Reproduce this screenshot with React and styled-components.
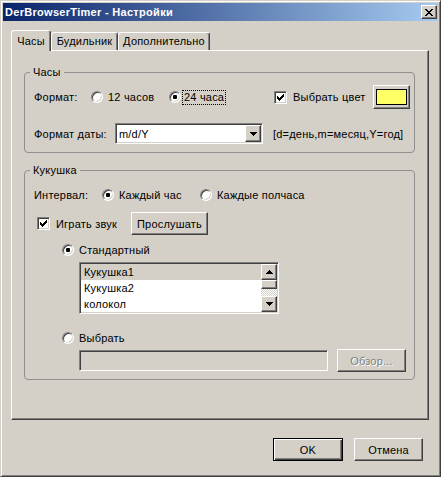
import React from "react";
import styled, { createGlobalStyle, css } from "styled-components";

// classic 3D palette
const FACE = "#d4d0c8";
const SHADOW = "#808080";
const DARK = "#404040";

const GlobalStyle = createGlobalStyle`
  html, body {
    margin: 0;
    padding: 0;
    background: ${FACE};
  }
`;

const raised = css`
  border: 1px solid;
  border-color: #fff ${DARK} ${DARK} #fff;
  box-shadow: inset -1px -1px ${SHADOW}, inset 1px 1px ${FACE};
`;

const sunken = css`
  border: 1px solid;
  border-color: ${SHADOW} #fff #fff ${SHADOW};
  box-shadow: inset 1px 1px ${DARK}, inset -1px -1px ${FACE};
  padding: 1px;
`;

const Window = styled.div`
  width: 441px;
  height: 477px;
  box-sizing: border-box;
  background: ${FACE};
  border: 1px solid;
  border-color: ${FACE} ${DARK} ${DARK} ${FACE};
  box-shadow: inset 1px 1px #fff, inset -1px -1px ${SHADOW};
  padding: 2px;
  display: flex;
  flex-direction: column;
  font: 11px "Liberation Sans", Arial, sans-serif;
  letter-spacing: 0.2px;
  color: #000;
`;

const TitleBar = styled.div`
  height: 18px;
  flex: none;
  display: flex;
  align-items: center;
  justify-content: space-between;
  padding: 0 1px 0 2px;
  background: linear-gradient(90deg, #0a246a, #a6caf0);
  color: #fff;
  font-weight: bold;
  letter-spacing: 0.3px;
`;

const CloseButton = styled.div`
  width: 16px;
  height: 14px;
  box-sizing: border-box;
  ${raised};
  background: ${FACE};
  display: flex;
  align-items: center;
  justify-content: center;
`;

const Body = styled.div`
  flex: 1;
  display: flex;
  flex-direction: column;
  padding: 9px 9px 0 8px;
`;

const TabStrip = styled.div`
  height: 20px;
  display: flex;
  align-items: flex-end;
`;

const Tab = styled.div`
  box-sizing: border-box;
  width: ${(p) => p.$w}px;
  height: ${(p) => (p.$active ? 21 : 18)}px;
  margin-bottom: ${(p) => (p.$active ? -1 : 0)}px;
  z-index: ${(p) => (p.$active ? 1 : 0)};
  padding-bottom: 1px;
  border: 1px solid;
  border-bottom: none;
  border-color: #fff ${DARK} transparent #fff;
  border-radius: 3px 3px 0 0;
  box-shadow: inset -1px 0 ${SHADOW};
  background: ${FACE};
  display: flex;
  align-items: center;
  justify-content: center;
`;

const TabPanel = styled.div`
  height: 370px;
  box-sizing: border-box;
  border: 1px solid;
  border-color: #fff ${DARK} ${DARK} #fff;
  box-shadow: inset -1px -1px ${SHADOW};
  padding: 15px 13px 0 12px;
  display: flex;
  flex-direction: column;
`;

const Group = styled.fieldset`
  margin: ${(p) => p.$top}px 0 0;
  padding: 0 0 0 5px;
  height: ${(p) => p.$height}px;
  box-sizing: border-box;
  min-width: 0;
  border: 1px solid #8f8f8f;
  border-radius: 4px;
`;

const Legend = styled.legend`
  padding: 0 3px;
  line-height: 13px;
  font-size: 11px;
`;

const GroupBody = styled.div`
  padding-left: 4px;
  display: flex;
  flex-direction: column;
`;

const Row = styled.div`
  display: flex;
  align-items: center;
  height: ${(p) => p.$h}px;
  margin-top: ${(p) => p.$top}px;
  padding-left: ${(p) => p.$indent || 0}px;
`;

const Label = styled.span`
  width: ${(p) => p.$w}px;
  flex: none;
`;

const Choice = styled.label`
  display: flex;
  align-items: center;
  width: ${(p) => (p.$w ? `${p.$w}px` : "auto")};
  flex: none;
  gap: ${(p) => p.$gap}px;
`;

const RadioCircle = styled.span`
  width: 12px;
  height: 12px;
  box-sizing: border-box;
  border-radius: 50%;
  border: 1px solid;
  border-color: ${SHADOW} #fff #fff ${SHADOW};
  box-shadow: inset 1px 1px ${DARK}, inset -1px -1px ${FACE};
  background: #fff;
  display: flex;
  align-items: center;
  justify-content: center;
  flex: none;

  &::after {
    content: "";
    width: 4px;
    height: 4px;
    border-radius: 1px;
    background: ${(p) => (p.$on ? "#000" : "transparent")};
  }
`;

const CheckBox = styled.span`
  width: 13px;
  height: 13px;
  box-sizing: border-box;
  ${sunken};
  background: #fff;
  display: flex;
  align-items: center;
  justify-content: center;
  flex: none;
`;

const Focus = styled.span`
  outline: 1px dotted #000;
  padding: 0 1px;
  line-height: 13px;
`;

const Button = styled.button`
  width: ${(p) => p.$w}px;
  height: ${(p) => p.$h || 23}px;
  margin-left: ${(p) => p.$left || 0}px;
  box-sizing: border-box;
  flex: none;
  padding: 0;
  font: inherit;
  letter-spacing: inherit;
  background: ${FACE};
  color: ${(p) => (p.disabled ? SHADOW : "#000")};
  text-shadow: ${(p) => (p.disabled ? "1px 1px #fff" : "none")};
  display: flex;
  align-items: center;
  justify-content: center;
  ${(p) =>
    p.$default
      ? css`
          border: 1px solid #000;
          box-shadow: inset 1px 1px #fff, inset -1px -1px ${DARK},
            inset -2px -2px ${SHADOW};
        `
      : raised};
`;

const Swatch = styled.span`
  width: 29px;
  height: 14px;
  border: 1px solid #000;
  background: #ffff66;
`;

const Combo = styled.div`
  width: 148px;
  height: 21px;
  box-sizing: border-box;
  ${sunken};
  background: #fff;
  display: flex;
  flex: none;
`;

const ComboText = styled.span`
  flex: 1;
  padding-left: 2px;
  display: flex;
  align-items: center;
`;

const ArrowButton = styled.span`
  width: 16px;
  height: ${(p) => p.$h || 16}px;
  box-sizing: border-box;
  ${raised};
  background: ${FACE};
  display: flex;
  align-items: center;
  justify-content: center;
  flex: none;
`;

const Hint = styled.span`
  margin-left: 10px;
`;

const ListBox = styled.div`
  width: 200px;
  height: 52px;
  box-sizing: border-box;
  margin: 2px 0 0 45px;
  ${sunken};
  background: #fff;
  display: flex;
`;

const Items = styled.div`
  flex: 1;
  display: flex;
  flex-direction: column;
`;

const Item = styled.div`
  height: 16px;
  line-height: 16px;
  padding-left: 3px;
  background: ${(p) => (p.$selected ? FACE : "transparent")};
`;

const ScrollBar = styled.div`
  width: 16px;
  display: flex;
  flex-direction: column;
`;

const Thumb = styled.span`
  height: 9px;
  box-sizing: border-box;
  ${raised};
  background: ${FACE};
`;

const Track = styled.span`
  flex: 1;
  background: repeating-conic-gradient(#fff 0 25%, ${FACE} 0 50%) 0 0 / 2px
    2px;
`;

const Edit = styled.div`
  width: 249px;
  height: 21px;
  box-sizing: border-box;
  margin-left: 45px;
  ${sunken};
  background: ${FACE};
`;

const Footer = styled.div`
  display: flex;
  justify-content: flex-end;
  gap: 11px;
  padding: 18px 6px 0 0;
`;

function Arrow({ up }) {
  return (
    <svg width="7" height="4" viewBox="0 0 7 4" shapeRendering="crispEdges">
      <path d={up ? "M3 0h1v1h1v1h1v1h1v1H0V3h1V2h1V1h1z" : "M0 0h7v1H6v1H5v1H4v1H3V3H2V2H1V1H0z"} fill="#000" />
    </svg>
  );
}

function CloseGlyph() {
  return (
    <svg width="8" height="7" viewBox="0 0 8 7" shapeRendering="crispEdges">
      <path
        d="M0 0h2v1h1v1h2V1h1V0h2v1H7v1H6v1H5v1h1v1h1v1h1v1H6V6H5V5H3v1H2v1H0V6h1V5h1V4h1V3H2V2H1V1H0z"
        fill="#000"
      />
    </svg>
  );
}

function Tick() {
  return (
    <svg width="7" height="7" viewBox="0 0 7 7" shapeRendering="crispEdges">
      <path d="M6 0h1v3H6v1H5v1H4v1H3v1H2V6H1V5H0V2h1v1h1v1h1V3h1V2h1V1h1z" fill="#000" />
    </svg>
  );
}

function Radio({ on, children, w, gap = 5 }) {
  return (
    <Choice $w={w} $gap={gap}>
      <RadioCircle $on={on} />
      {children}
    </Choice>
  );
}

export default function App() {
  return (
    <>
      <GlobalStyle />
      <Window>
        <TitleBar>
          <span>DerBrowserTimer - Настройки</span>
          <CloseButton>
            <CloseGlyph />
          </CloseButton>
        </TitleBar>

        <Body>
          <TabStrip>
            <Tab $active $w={40}>Часы</Tab>
            <Tab $w={67}>Будильник</Tab>
            <Tab $w={92}>Дополнительно</Tab>
          </TabStrip>

          <TabPanel>
            <Group $top={0} $height={87}>
              <Legend>Часы</Legend>
              <GroupBody>
                <Row $h={20} $top={8}>
                  <Label $w={57}>Формат:</Label>
                  <Radio w={78}>12 часов</Radio>
                  <Radio on w={105} gap={2}>
                    <Focus>24 часа</Focus>
                  </Radio>
                  <Choice $gap={6} $w={99}>
                    <CheckBox>
                      <Tick />
                    </CheckBox>
                    Выбрать цвет
                  </Choice>
                  <Button $w={37} $h={24}>
                    <Swatch />
                  </Button>
                </Row>
                <Row $h={21} $top={16}>
                  <Label $w={81}>Формат даты:</Label>
                  <Combo>
                    <ComboText>m/d/Y</ComboText>
                    <ArrowButton $h={17}>
                      <Arrow />
                    </ArrowButton>
                  </Combo>
                  <Hint>[d=день,m=месяц,Y=год]</Hint>
                </Row>
              </GroupBody>
            </Group>

            <Group $top={11} $height={216}>
              <Legend>Кукушка</Legend>
              <GroupBody>
                <Row $h={20} $top={8}>
                  <Label $w={68}>Интервал:</Label>
                  <Radio on w={98}>Каждый час</Radio>
                  <Radio>Каждые полчаса</Radio>
                </Row>
                <Row $h={23} $top={7} $indent={3}>
                  <Choice $gap={6} $w={94}>
                    <CheckBox>
                      <Tick />
                    </CheckBox>
                    Играть звук
                  </Choice>
                  <Button $w={77}>Прослушать</Button>
                </Row>
                <Row $h={20} $top={5} $indent={28}>
                  <Radio on>Стандартный</Radio>
                </Row>
                <ListBox>
                  <Items>
                    <Item $selected>Кукушка1</Item>
                    <Item>Кукушка2</Item>
                    <Item>колокол</Item>
                  </Items>
                  <ScrollBar>
                    <ArrowButton>
                      <Arrow up />
                    </ArrowButton>
                    <Thumb />
                    <Track />
                    <ArrowButton>
                      <Arrow />
                    </ArrowButton>
                  </ScrollBar>
                </ListBox>
                <Row $h={20} $top={14} $indent={28}>
                  <Radio>Выбрать</Radio>
                </Row>
                <Row $h={23} $top={1}>
                  <Edit />
                  <Button $w={69} $left={9} disabled>
                    Обзор...
                  </Button>
                </Row>
              </GroupBody>
            </Group>
          </TabPanel>

          <Footer>
            <Button $w={70} $default>
              OK
            </Button>
            <Button $w={69}>Отмена</Button>
          </Footer>
        </Body>
      </Window>
    </>
  );
}
